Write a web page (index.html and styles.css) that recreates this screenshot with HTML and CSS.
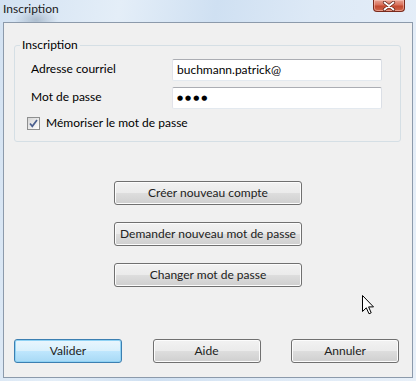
FILE: index.html
```html
<!DOCTYPE html>
<html lang="fr">
<head>
<meta charset="utf-8">
<title>Inscription</title>
<link rel="stylesheet" href="styles.css">
</head>
<body>
<div class="window">
  <div class="titlebar">
    <span class="title">Inscription</span>
    <div class="close">
      <svg width="14" height="10" viewBox="0 0 14 10"><path d="M2.5 1.5 L11.5 8.5 M11.5 1.5 L2.5 8.5" stroke="#5a1e14" stroke-width="3.2" stroke-linecap="round"/><path d="M2.5 1.5 L11.5 8.5 M11.5 1.5 L2.5 8.5" stroke="#ffffff" stroke-width="1.8" stroke-linecap="round"/></svg>
    </div>
  </div>
  <div class="client">
    <fieldset class="group">
      <legend>Inscription</legend>
      <div class="row">
        <span class="label">Adresse courriel</span>
        <div class="textbox">buchmann.patrick@</div>
      </div>
      <div class="row">
        <span class="label">Mot de passe</span>
        <div class="textbox pw">●●●●</div>
      </div>
      <div class="check">
        <span class="box"><svg width="11" height="11" viewBox="0 0 11 11"><path d="M2 5.5 L4.3 8.3 L9 2" fill="none" stroke="#4a5f8f" stroke-width="1.7"/></svg></span>
        <span>Mémoriser le mot de passe</span>
      </div>
    </fieldset>
    <div class="actions">
      <div class="btn wide">Créer nouveau compte</div>
      <div class="btn wide">Demander nouveau mot de passe</div>
      <div class="btn wide">Changer mot de passe</div>
    </div>
    <div class="footer">
      <div class="btn small default">Valider</div>
      <div class="btn small">Aide</div>
      <div class="btn small">Annuler</div>
    </div>
    <svg class="cursor" width="13" height="20" viewBox="0 0 13 20"><path d="M0.5 0.5 L0.5 16.5 L4.3 12.8 L7 18.8 L9.2 17.8 L6.6 11.9 L11.5 11.9 Z" fill="#ffffff" stroke="#000000" stroke-width="1" stroke-linejoin="miter"/></svg>
  </div>
</div>
</body>
</html>
```

FILE: styles.css
```css
html, body {
  margin: 0;
  padding: 0;
}
body {
  width: 416px;
  height: 381px;
  overflow: hidden;
  font-family: Lato, "Liberation Sans", sans-serif;
  font-size: 12px;
  color: #000;
}
.window {
  width: 416px;
  height: 381px;
  box-sizing: border-box;
  display: flex;
  flex-direction: column;
  padding: 0 3px 3px 3px;
  background:
    radial-gradient(ellipse 22px 12px at 36px 20px, rgba(120,140,160,0.45), rgba(120,140,160,0) 100%),
    linear-gradient(100deg, #d3e2f2 0%, #e4eef8 25%, #cfe0f2 45%, #dde9f6 65%, #e8f0f9 100%);
}
.titlebar {
  height: 22px;
  flex: none;
  display: flex;
  align-items: flex-start;
}
.title {
  margin-top: 1px;
  line-height: 16px;
  font-size: 12px;
  color: #1a1a1a;
}
.close {
  margin-left: auto;
  margin-right: 8px;
  width: 32px;
  height: 12px;
  box-sizing: border-box;
  border: 1px solid #7a2a1c;
  border-top: none;
  border-radius: 0 0 4px 4px;
  background: linear-gradient(#e8a493 0%, #d9705a 45%, #c24a30 55%, #d0654a 100%);
  box-shadow: inset 0 0 0 1px rgba(255,210,200,0.5);
  display: flex;
  align-items: center;
  justify-content: center;
}
.client {
  flex: 1;
  position: relative;
  display: flex;
  flex-direction: column;
  border: 1px solid #8c9aab;
  background: #f0f0f0;
}
.group {
  margin: 14px 11px 0 10px;
  padding: 6px 0 10px 5px;
  border: 1px solid #d5dfe5;
  border-radius: 3px;
  min-width: 0;
}
.group legend {
  padding: 0 2px;
  line-height: 16px;
}
.row {
  display: grid;
  grid-template-columns: 141px 210px;
  padding-left: 11px;
  margin-bottom: 6px;
}
.label {
  line-height: 16px;
  margin-top: 2px;
}
.textbox {
  height: 22px;
  box-sizing: border-box;
  border: 1px solid;
  border-color: #abadb3 #dbdfe6 #e3e9ef #e2e3ea;
  border-radius: 2px;
  background: #fff;
  padding-left: 4px;
  line-height: 20px;
}
.textbox.pw {
  font-family: "DejaVu Sans", sans-serif;
  font-size: 7px;
  letter-spacing: 2px;
}
.check {
  display: flex;
  align-items: center;
  gap: 6px;
  margin-top: 5px;
  padding-left: 7px;
  line-height: 16px;
}
.box {
  width: 13px;
  height: 13px;
  box-sizing: border-box;
  border: 1px solid #8e8f8f;
  background: linear-gradient(135deg, #d6d6d6, #ffffff);
  display: flex;
  align-items: center;
  justify-content: center;
}
.actions {
  margin-top: 39px;
  display: flex;
  flex-direction: column;
  align-items: center;
  gap: 17px;
}
.btn {
  height: 24px;
  box-sizing: border-box;
  border: 1px solid #707070;
  border-radius: 3px;
  background: linear-gradient(#f2f2f2 0%, #ebebeb 48%, #dddddd 52%, #cfcfcf 100%);
  box-shadow: inset 0 0 0 1px #fcfcfc;
  display: flex;
  align-items: center;
  justify-content: center;
  line-height: 16px;
  padding-bottom: 1px;
  color: #222;
}
.btn.wide {
  width: 188px;
}
.footer {
  margin-top: auto;
  margin-bottom: 14px;
  padding: 0 13px 0 10px;
  display: flex;
  justify-content: space-between;
}
.btn.small {
  width: 108px;
}
.btn.default {
  border-color: #3c7fb1;
  background: linear-gradient(#eaf6fd 0%, #d9f0fc 48%, #bee6fd 52%, #a7d9f5 100%);
  box-shadow: inset 0 0 0 1px #8fd2f4;
}
.cursor {
  position: absolute;
  left: 358px;
  top: 272px;
}
```
